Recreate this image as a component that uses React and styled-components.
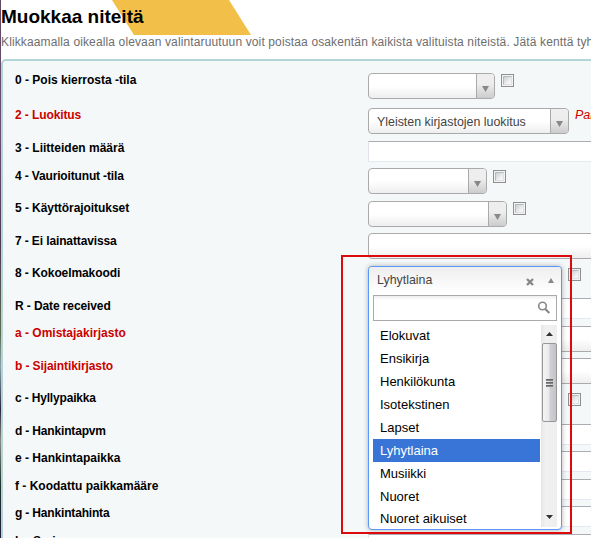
import React from "react";
import styled, { createGlobalStyle, css } from "styled-components";

const Global = createGlobalStyle`
  *, *::before { box-sizing: border-box; }
  html, body { margin: 0; padding: 0; overflow: hidden; background: #fff; }
  body { font-family: "Liberation Sans", Arial, sans-serif; font-size: 12px; color: #000; }
`;

const Page = styled.main`
  position: relative;
  width: 591px;
  height: 538px;
  overflow: hidden;
  padding-left: 1px;
  background: linear-gradient(#5d4a62, #6b4d72 25%, #4d3b55 45%, #5f6b4c 62%, #8aa0a8 68%, #2c2440 76%, #8a8a80 82%, #20352a 90%, #241c3a) 0 0 / 1px 100% no-repeat, #fff;
`;

const Ribbon = styled.svg`
  position: absolute;
  left: 112px;
  top: 0;
  width: 140px;
  height: 35px;
`;

const Title = styled.h1`
  position: relative;
  margin: 0;
  padding-top: 6px;
  height: 35px;
  font-size: 19px;
  line-height: 22px;
  font-weight: bold;
  white-space: nowrap;
`;

const Hint = styled.p`
  margin: 0;
  height: 24px;
  line-height: 14px;
  font-size: 12px;
  letter-spacing: 0.13px;
  color: #6e6e6e;
  white-space: nowrap;
`;

const Panel = styled.section`
  width: 700px;
  height: 600px;
  border: 2px solid #b4d5d7;
  border-radius: 5px;
  background: #f4f8f9;
  padding: 12px 0 0 12px;
`;

const Row = styled.div`
  display: grid;
  grid-template-columns: 353px auto;
  height: ${(p) => p.$h}px;
`;

const Label = styled.label`
  padding-top: ${(p) => p.$drop || 0}px;
  font-weight: bold;
  font-size: 12px;
  line-height: 14px;
  letter-spacing: ${(p) => p.$ls || 0}px;
  white-space: nowrap;
  color: ${(p) => (p.$required ? "#c00" : "#000")};
`;

const Controls = styled.div`
  display: flex;
  align-items: flex-start;
`;

const SelectBox = styled.div`
  display: flex;
  flex: none;
  width: ${(p) => p.$w}px;
  height: 26px;
  border: 1px solid #aaa;
  border-radius: 4px;
  overflow: hidden;
  background: linear-gradient(#fff 50%, #eee);
  font-size: 12.4px;
  line-height: 26px;
  color: #444;
`;

const SelectText = styled.span`
  flex: 1;
  padding-left: 8px;
  white-space: nowrap;
`;

const SelectArrow = styled.span`
  display: flex;
  justify-content: center;
  padding-top: 12px;
  width: 18px;
  border-left: 1px solid #aaa;
  background: linear-gradient(#eee 40%, #ccc);
`;

const TextInput = styled.input`
  width: 320px;
  height: 21px;
  border: 1px solid;
  border-color: #abadb3 #dbdfe6 #e3e9ef #e2e3ea;
  background: #fff;
  padding: 0;
`;

const Check = styled.span`
  flex: none;
  width: 13px;
  height: 13px;
  margin: ${(p) => p.$top}px 0 0 6px;
  border: 1px solid #8e8f8f;
  padding: 1px;
  background: #f4f4f4;
  &::before {
    content: "";
    display: block;
    height: 9px;
    border: 1px solid #b6bac0;
    border-right-color: #dedfe1;
    border-bottom-color: #dedfe1;
    background: linear-gradient(135deg, #cbcfd5, #f6f6f6 80%);
  }
`;

const RequiredNote = styled.em`
  margin-left: 6px;
  font-size: 12.5px;
  line-height: 14px;
  color: #c00;
  white-space: nowrap;
`;

const Highlight = styled.div`
  position: absolute;
  left: 341px;
  top: 255px;
  width: 231px;
  height: 279px;
  border: 2px solid #dc0a0c;
  pointer-events: none;
`;

const Drop = styled.div`
  position: absolute;
  left: 368px;
  top: 266px;
  width: 194px;
  height: 264px;
  border: 1px solid #5897fb;
  border-radius: 4px;
  background: #fff;
  box-shadow: 0 0 5px rgba(0, 0, 0, 0.3);
  padding: 0 4px;
`;

const DropHead = styled.div`
  display: flex;
  height: 28px;
  margin: 0 -4px;
  padding: 0 7px 0 8px;
  border-radius: 3px 3px 0 0;
  background: linear-gradient(#eee, #fff 90%);
  font-size: 12.4px;
  color: #444;
`;

const HeadText = styled.span`
  flex: 1;
  line-height: 26px;
`;

const ClearIcon = styled.svg`
  width: 8px;
  height: 8px;
  margin: 11px 14px 0 0;
`;

const HeadArrow = styled.span`
  display: flex;
  align-items: flex-start;
  padding-top: 11px;
`;

const SearchBox = styled.div`
  display: flex;
  justify-content: flex-end;
  height: 26px;
  border: 1px solid #aaa;
  background: linear-gradient(#eee 0, #fff 4px);
  padding: 5px 5px 0 0;
`;

const ListArea = styled.div`
  display: flex;
  height: 203px;
  margin-top: 3px;
`;

const Options = styled.ul`
  flex: 1;
  margin: 0 1px 0 0;
  padding: 0;
  list-style: none;
`;

const Option = styled.li`
  height: ${(p) => p.$h}px;
  padding-left: 7px;
  font-size: 13px;
  line-height: 23px;
  white-space: nowrap;
  ${(p) => p.$active && css`
    background: #3875d7;
    color: #fff;
  `}
`;

const ScrollBar = styled.div`
  display: flex;
  flex-direction: column;
  align-items: center;
  width: 16px;
  margin-top: 1px;
  background: linear-gradient(90deg, #e6e6e6, #f1f1f1 30%, #eee);
`;

const ScrollEnd = styled.span`
  display: flex;
  justify-content: center;
  align-items: center;
  height: ${(p) => p.$h}px;
`;

const Thumb = styled.span`
  display: flex;
  flex-direction: column;
  align-items: center;
  justify-content: center;
  gap: 1px;
  width: 15px;
  height: 79px;
  margin-bottom: auto;
  border: 1px solid #979797;
  border-radius: 2px;
  background: linear-gradient(90deg, #f5f5f5, #e9e9eb 45%, #cfd0d2 55%, #c3c4c8);
`;

const Grip = styled.i`
  width: 7px;
  height: 2px;
  background: linear-gradient(#555, #999);
`;

const Triangle = ({ up, w = 7, h = 6, color = "#888" }) => (
  <svg width={w} height={h} viewBox="0 0 7 6" preserveAspectRatio="none">
    <path d={up ? "M0 6h7L3.5 0z" : "M0 0h7L3.5 6z"} fill={color} />
  </svg>
);

const Select = ({ w, children }) => (
  <SelectBox $w={w}>
    <SelectText>{children}</SelectText>
    <SelectArrow><Triangle /></SelectArrow>
  </SelectBox>
);

const rows = [
  { h: 35, label: "0 - Pois kierrosta -tila", select: 127, check: 1 },
  { h: 33, label: "2 - Luokitus", ls: -0.1, required: true, select: 201, value: "Yleisten kirjastojen luokitus", note: "Pakollinen" },
  { h: 27, label: "3 - Liitteiden määrä" },
  { h: 33, label: "4 - Vaurioitunut -tila", ls: -0.15, drop: 1, select: 119, check: 2 },
  { h: 32, label: "5 - Käyttörajoitukset", ls: -0.06, select: 139, check: 1 },
  { h: 33, label: "7 - Ei lainattavissa", ls: -0.12, drop: 1, select: 300 },
  { h: 32, label: "8 - Kokoelmakoodi", ls: -0.09, select: 194, check: 2 },
  { h: 28, label: "R - Date received", ls: -0.1, drop: 1 },
  { h: 32, label: "a - Omistajakirjasto", required: true, select: 300 },
  { h: 33, label: "b - Sijaintikirjasto", ls: -0.1, required: true, drop: 1, select: 300 },
  { h: 33, label: "c - Hyllypaikka", ls: -0.17, select: 194, check: 2 },
  { h: 27, label: "d - Hankintapvm", ls: -0.17 },
  { h: 28, label: "e - Hankintapaikka" },
  { h: 27, label: "f - Koodattu paikkamääre" },
  { h: 28, label: "g - Hankintahinta", ls: -0.17 },
  { h: 28, label: "h - Sarjanumero" },
];

const options = [
  ["Elokuvat", 23], ["Ensikirja", 23], ["Henkilökunta", 23], ["Isotekstinen", 23], ["Lapset", 23],
  ["Lyhytlaina", 23], ["Musiikki", 23], ["Nuoret", 22], ["Nuoret aikuiset", 23],
];

export default function App() {
  return (
    <Page>
      <Global />
      <Ribbon viewBox="0 0 140 35">
        <path d="M0 0H117L139 35H22z" fill="#f2c048" />
      </Ribbon>
      <Title>Muokkaa niteitä</Title>
      <Hint>
        Klikkaamalla oikealla olevaan valintaruutuun voit poistaa osakentän kaikista valituista niteistä. Jätä kenttä tyhjäksi
      </Hint>
      <Panel>
        {rows.map((r) => (
          <Row key={r.label} $h={r.h}>
            <Label $required={r.required} $drop={r.drop} $ls={r.ls}>{r.label}</Label>
            <Controls>
              {r.select ? <Select w={r.select}>{r.value}</Select> : <TextInput />}
              {r.check && <Check $top={r.check} />}
              {r.note && <RequiredNote>{r.note}</RequiredNote>}
            </Controls>
          </Row>
        ))}
      </Panel>
      <Drop>
        <DropHead>
          <HeadText>Lyhytlaina</HeadText>
          <ClearIcon viewBox="0 0 8 8">
            <path d="M1 1l6 6M7 1L1 7" stroke="#888" strokeWidth="2.4" />
          </ClearIcon>
          <HeadArrow><Triangle up w={6} h={5} /></HeadArrow>
        </DropHead>
        <SearchBox>
          <svg width="14" height="14" viewBox="0 0 14 14" fill="none" stroke="#888">
            <circle cx="5.5" cy="5" r="3.8" strokeWidth="1.6" />
            <path d="M8.3 8l4 4" strokeWidth="2.2" />
          </svg>
        </SearchBox>
        <ListArea>
          <Options>
            {options.map(([name, h]) => (
              <Option key={name} $h={h} $active={name === "Lyhytlaina"}>{name}</Option>
            ))}
          </Options>
          <ScrollBar>
            <ScrollEnd $h={18}><Triangle up w={7} h={4} color="#333" /></ScrollEnd>
            <Thumb><Grip /><Grip /><Grip /></Thumb>
            <ScrollEnd $h={20}><Triangle w={7} h={4} color="#333" /></ScrollEnd>
          </ScrollBar>
        </ListArea>
      </Drop>
      <Highlight />
    </Page>
  );
}
